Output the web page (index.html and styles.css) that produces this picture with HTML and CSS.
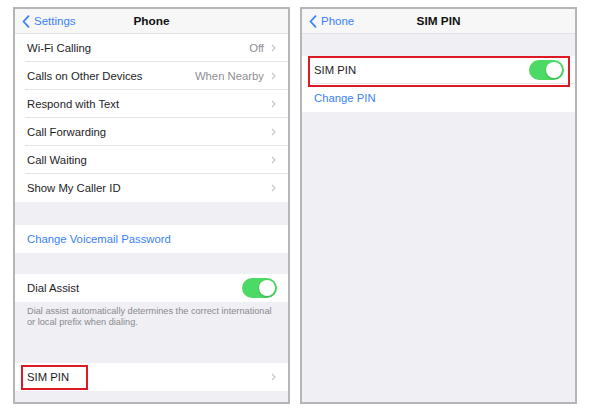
FILE: index.html
```html
<!DOCTYPE html>
<html>

<head>
    <title>SIM PIN settings</title>

    <link rel="stylesheet" href="styles.css">
</head>

<body>
    <div class="screens">

        <!-- Phone settings screen -->
        <section class="phone">
            <header class="navbar">
                <span class="back">
                    <svg width="8" height="13" viewBox="0 0 8 13"><path d="M6.5 1.2L1.5 6.5l5 5.3" /></svg>
                    Settings
                </span>
                <span class="title">Phone</span>
                <span></span>
            </header>

            <div class="group">
                <div class="cell"><div class="cell-body"><span class="label">Wi-Fi Calling</span><span class="detail">Off</span><svg class="chevron" width="5" height="8" viewBox="0 0 5 8"><path d="M1 1l3 3-3 3" /></svg></div></div>
                <div class="cell"><div class="cell-body"><span class="label">Calls on Other Devices</span><span class="detail">When Nearby</span><svg class="chevron" width="5" height="8" viewBox="0 0 5 8"><path d="M1 1l3 3-3 3" /></svg></div></div>
                <div class="cell"><div class="cell-body"><span class="label">Respond with Text</span><svg class="chevron" width="5" height="8" viewBox="0 0 5 8"><path d="M1 1l3 3-3 3" /></svg></div></div>
                <div class="cell"><div class="cell-body"><span class="label">Call Forwarding</span><svg class="chevron" width="5" height="8" viewBox="0 0 5 8"><path d="M1 1l3 3-3 3" /></svg></div></div>
                <div class="cell"><div class="cell-body"><span class="label">Call Waiting</span><svg class="chevron" width="5" height="8" viewBox="0 0 5 8"><path d="M1 1l3 3-3 3" /></svg></div></div>
                <div class="cell"><div class="cell-body"><span class="label">Show My Caller ID</span><svg class="chevron" width="5" height="8" viewBox="0 0 5 8"><path d="M1 1l3 3-3 3" /></svg></div></div>
            </div>

            <div class="group gap-voicemail">
                <div class="cell"><div class="cell-body"><span class="label link">Change Voicemail Password</span></div></div>
            </div>

            <div class="group gap-dial">
                <div class="cell"><div class="cell-body"><span class="label">Dial Assist</span><span class="switch"><span class="knob"></span></span></div></div>
            </div>
            <p class="footnote">Dial assist automatically determines the correct international or local prefix when dialing.</p>

            <div class="group">
                <div class="cell"><div class="cell-body"><span class="label marked">SIM PIN</span><svg class="chevron" width="5" height="8" viewBox="0 0 5 8"><path d="M1 1l3 3-3 3" /></svg></div></div>
            </div>
        </section>

        <!-- SIM PIN screen -->
        <section class="phone">
            <header class="navbar">
                <span class="back">
                    <svg width="8" height="13" viewBox="0 0 8 13"><path d="M6.5 1.2L1.5 6.5l5 5.3" /></svg>
                    Phone
                </span>
                <span class="title">SIM PIN</span>
                <span></span>
            </header>

            <div class="group gap-top">
                <div class="cell highlight"><div class="cell-body"><span class="label">SIM PIN</span><span class="switch"><span class="knob"></span></span></div></div>
                <div class="cell"><div class="cell-body"><span class="label link">Change PIN</span></div></div>
            </div>
        </section>

    </div>
</body>

</html>
```

FILE: styles.css
```css
body {
    font-family: "Liberation Sans", Arial, sans-serif;
    margin: 0;
    padding: 0;
    background-color: #fff;
    color: #1d1d1f;
}

.screens {
    display: flex;
    gap: 10px;
    padding: 7px 13px;
}

.phone {
    width: 277px;
    height: 397px;
    box-sizing: border-box;
    border: 2px solid #b5b5b8;
    background-color: #efeff4;
    overflow: hidden;
}

/* Top navigation bar */
.navbar {
    display: grid;
    grid-template-columns: 1fr auto 1fr;
    align-items: center;
    height: 25px;
    box-sizing: border-box;
    background-color: #f7f7f7;
    border-bottom: 1px solid #e2e2e6;
}

.back {
    display: flex;
    align-items: center;
    gap: 4px;
    padding-left: 7px;
    color: #3a82f6;
    font-size: 11.5px;
}

.back svg path {
    fill: none;
    stroke: #3a82f6;
    stroke-width: 1.8;
    stroke-linecap: round;
    stroke-linejoin: round;
}

.title {
    font-size: 11.8px;
    font-weight: bold;
    color: #111;
}

/* Grouped table cells */
.group {
    background-color: #fff;
}

.gap-voicemail {
    margin-top: 23px;
}

.gap-dial {
    margin-top: 21px;
}

.gap-top {
    margin-top: 22px;
}

.cell {
    padding-left: 10px;
    position: relative;
}

.cell-body {
    display: flex;
    align-items: center;
    height: 28px;
    box-sizing: border-box;
    padding: 0 12px 0 2px;
    border-bottom: 1px solid #e4e4e7;
}

.cell:last-child .cell-body {
    border-bottom: none;
}

.label {
    flex: 1;
    font-size: 11.3px;
}

.link {
    color: #3a82f6;
}

.detail {
    color: #8e8e93;
    font-size: 11.3px;
    margin-right: 7px;
}

.chevron path {
    fill: none;
    stroke: #c4c4c9;
    stroke-width: 1.1;
}

/* Toggle switch */
.switch {
    display: flex;
    justify-content: flex-end;
    align-items: center;
    width: 35px;
    height: 20px;
    box-sizing: border-box;
    padding: 2px;
    margin-right: -1px;
    border-radius: 10px;
    background-color: #4cd964;
}

.knob {
    width: 16px;
    height: 16px;
    border-radius: 50%;
    background-color: #fff;
    box-shadow: 0 1px 2px rgba(0, 0, 0, 0.2);
}

.footnote {
    margin: 0;
    height: 61px;
    box-sizing: border-box;
    padding: 4px 14px 0 12px;
    font-size: 9.2px;
    line-height: 11px;
    color: #8a8a8f;
}

/* Red marks drawn over the screenshot */
.marked {
    flex: none;
    display: flex;
    align-items: center;
    width: 67px;
    height: 25px;
    box-sizing: border-box;
    margin-left: -6px;
    padding-left: 4px;
    border: 2px solid #dd1a24;
}

.marked + .chevron {
    margin-left: auto;
}

.highlight::after {
    content: "";
    position: absolute;
    top: 0;
    bottom: -3px;
    left: 6px;
    right: 5px;
    border: 2px solid #dd1a24;
}
```
